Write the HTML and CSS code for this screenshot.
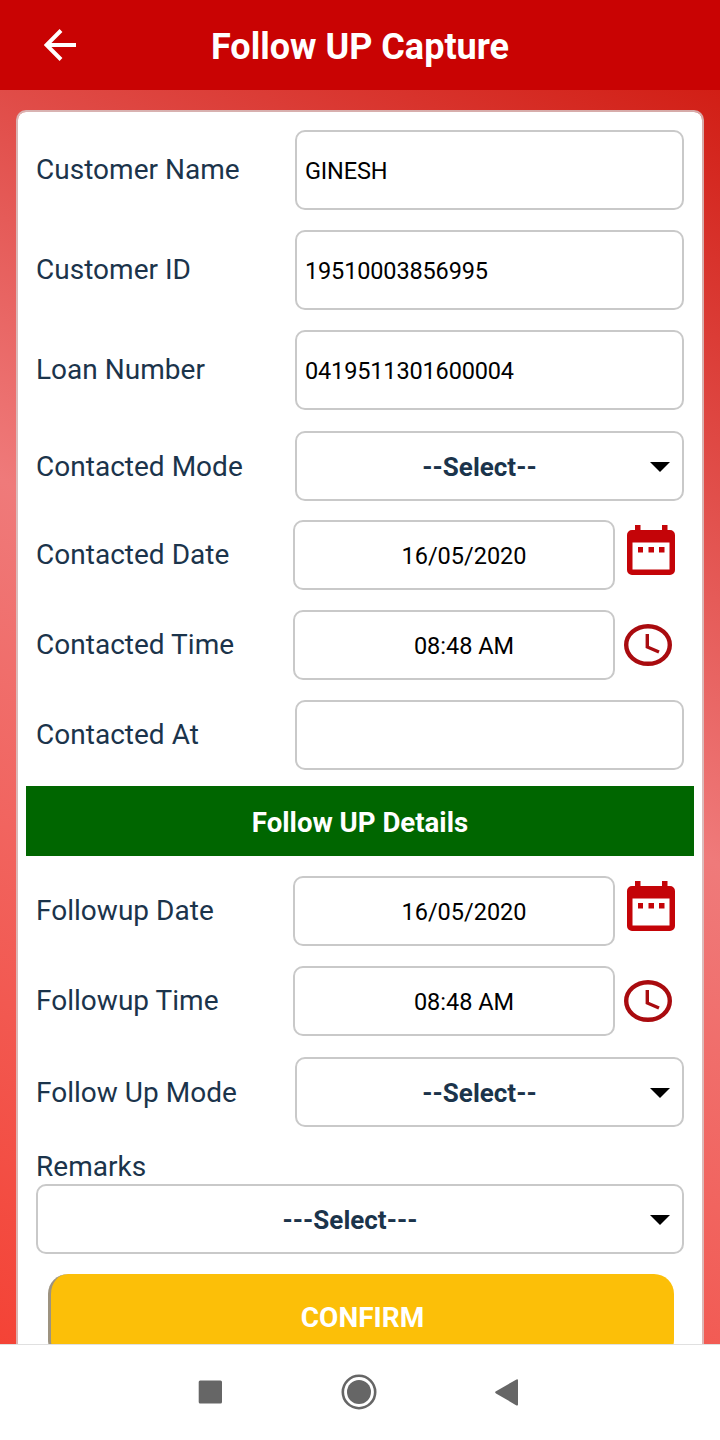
FILE: index.html
```html
<!DOCTYPE html>
<html lang="en">
<head>
    <meta charset="UTF-8">
    <meta name="viewport" content="width=device-width, initial-scale=1.0">
    <title>Follow UP Capture</title>
    <link rel="stylesheet" href="styles.css">
</head>
<body>
    <svg class="defs" width="0" height="0">
        <symbol id="calendar" viewBox="0 0 48 50">
            <path fill-rule="evenodd" d="M8 0h5.500v5h21.500v-5h5.500v5h2.500a5 5 0 0 1 5 5v35a5 5 0 0 1-5 5h-38a5 5 0 0 1-5-5v-35a5 5 0 0 1 5-5h3zM5.500 17.500v27h37v-27zM11 22h5v5.500h-5zM21.500 22h5.500v5.500h-5.500zM32 22h5.500v5.500h-5.500z"/>
        </symbol>
        <symbol id="clock" viewBox="0 0 48 42">
            <ellipse cx="24" cy="21" rx="21.800" ry="18.800" fill="none" stroke="currentColor" stroke-width="4.400"/>
            <path d="M23.300 10v13l11.700 5" fill="none" stroke="currentColor" stroke-width="3.400"/>
        </symbol>
    </svg>

    <div class="app">
        <header class="header">
            <svg class="back" viewBox="0 0 32 32"><path d="M17 1.500L2.500 16L17 30.500M3 16h29" fill="none" stroke="#fff" stroke-width="4"/></svg>
            <h1>Follow UP Capture</h1>
        </header>

        <form class="card">
            <div class="row tall">
                <label>Customer Name</label>
                <div class="field">GINESH</div>
            </div>
            <div class="row tall">
                <label>Customer ID</label>
                <div class="field">19510003856995</div>
            </div>
            <div class="row tall">
                <label>Loan Number</label>
                <div class="field">0419511301600004</div>
            </div>
            <div class="row mode">
                <label>Contacted Mode</label>
                <div class="field select"><span>--Select--</span></div>
            </div>
            <div class="row picker">
                <label>Contacted Date</label>
                <div class="field">16/05/2020</div>
                <svg class="calendar"><use href="#calendar"/></svg>
            </div>
            <div class="row picker">
                <label>Contacted Time</label>
                <div class="field">08:48 AM</div>
                <svg class="clock"><use href="#clock"/></svg>
            </div>
            <div class="row">
                <label>Contacted At</label>
                <div class="field"></div>
            </div>

            <h2>Follow UP Details</h2>

            <div class="row picker">
                <label>Followup Date</label>
                <div class="field">16/05/2020</div>
                <svg class="calendar"><use href="#calendar"/></svg>
            </div>
            <div class="row picker">
                <label>Followup Time</label>
                <div class="field">08:48 AM</div>
                <svg class="clock"><use href="#clock"/></svg>
            </div>
            <div class="row followup-mode">
                <label>Follow Up Mode</label>
                <div class="field select"><span>--Select--</span></div>
            </div>
            <div class="remarks">
                <label>Remarks</label>
                <div class="field select"><span>---Select---</span></div>
            </div>
            <button class="confirm" type="button">CONFIRM</button>
        </form>
    </div>

    <nav class="navbar">
        <svg viewBox="0 0 36 36"><rect x="6.700" y="6.500" width="23.300" height="23" rx="1.500"/></svg>
        <svg viewBox="0 0 36 36"><circle cx="18" cy="18" r="16.200" fill="none" stroke="#666" stroke-width="2.600"/><circle cx="18" cy="18" r="12"/></svg>
        <svg viewBox="0 0 36 36"><path d="M6 17.200L26.500 5.400q1.500-.6 1.500 1v24q0 1.600-1.500 1L6 19.400q-1.800-1.100 0-2.200z"/></svg>
    </nav>
</body>
</html>
```
FILE: styles.css
```css
* {
    box-sizing: border-box;
}

body {
    margin: 0;
    height: 1440px;
    overflow: hidden;
    font-family: Roboto, sans-serif;
    background: #fff;
}

.defs {
    display: block;
}

.app {
    height: 1344px;
    overflow: hidden;
    background: linear-gradient(28.18deg, #f44336, #ef7a7a 50%, #ce140a);
}

.header {
    display: flex;
    align-items: center;
    height: 90px;
    padding: 0 44px;
    background: #c90303;
}

.back {
    width: 32px;
    height: 32px;
}

.header h1 {
    flex: 1;
    margin: 4px 32px 0 0;
    text-align: center;
    font-size: 36px;
    line-height: 42px;
    color: #fff;
}

.card {
    margin: 20px 16px 0;
    padding: 18px 18px 0;
    height: 1300px;
    border: 2px solid rgba(215, 205, 205, 0.8);
    border-radius: 10px;
    background: #fff;
    background-clip: padding-box;
}

.row {
    display: flex;
    align-items: center;
    height: 70px;
    margin-bottom: 20px;
}

.row label {
    width: 259px;
}

label {
    font-size: 28px;
    line-height: 34px;
    letter-spacing: 0.02px;
    color: #1b344b;
}

.field {
    flex: 1;
    display: flex;
    align-items: center;
    height: 70px;
    padding: 2px 8px 0;
    border: 2px solid #c9c9c9;
    border-radius: 10px;
    font-size: 23.5px;
    letter-spacing: -0.15px;
    color: #000;
}

.tall,
.tall .field {
    height: 80px;
}

.mode {
    margin: 21px 0 19px;
}

.mode label,
.followup-mode label {
    padding-top: 2px;
}

.picker label {
    width: 257px;
}

.picker .field {
    flex: none;
    width: 322px;
    justify-content: center;
    padding-left: 28px;
    letter-spacing: 0;
}

.calendar {
    width: 48px;
    height: 50px;
    margin: 0 0 10px 12px;
    fill: #c40408;
}

.clock {
    width: 48px;
    height: 42px;
    margin-left: 9px;
    color: #a90b0f;
}

.select {
    padding: 2px 12px 0;
    font-size: 26px;
    font-weight: bold;
    letter-spacing: 0;
    color: #1b344b;
}

.select span {
    flex: 1;
    text-align: center;
}

.select::after {
    content: "";
    border: 10px solid transparent;
    border-top-color: #000;
    border-bottom: 0;
}

.card h2 {
    margin: -4px -10px 20px;
    text-align: center;
    font-size: 27.6px;
    line-height: 73px;
    height: 70px;
    color: #fff;
    background: #006600;
}

.followup-mode {
    margin: 21px 0;
}

.remarks label {
    display: block;
    height: 36px;
    line-height: 38px;
}

.confirm {
    display: block;
    width: 626px;
    height: 86px;
    margin: 20px 0 0 12px;
    border: 0;
    border-left: 3px solid #9d9380;
    border-radius: 20px;
    font-family: inherit;
    font-size: 28px;
    font-weight: bold;
    color: #fff;
    background: #fcbf08;
}

.navbar {
    display: flex;
    justify-content: center;
    gap: 113px;
    height: 96px;
    padding: 29px 2px 0 0;
    border-top: 1px solid #e0e0e0;
    background: #fff;
}

.navbar svg {
    width: 36px;
    height: 36px;
    fill: #666;
}
```
